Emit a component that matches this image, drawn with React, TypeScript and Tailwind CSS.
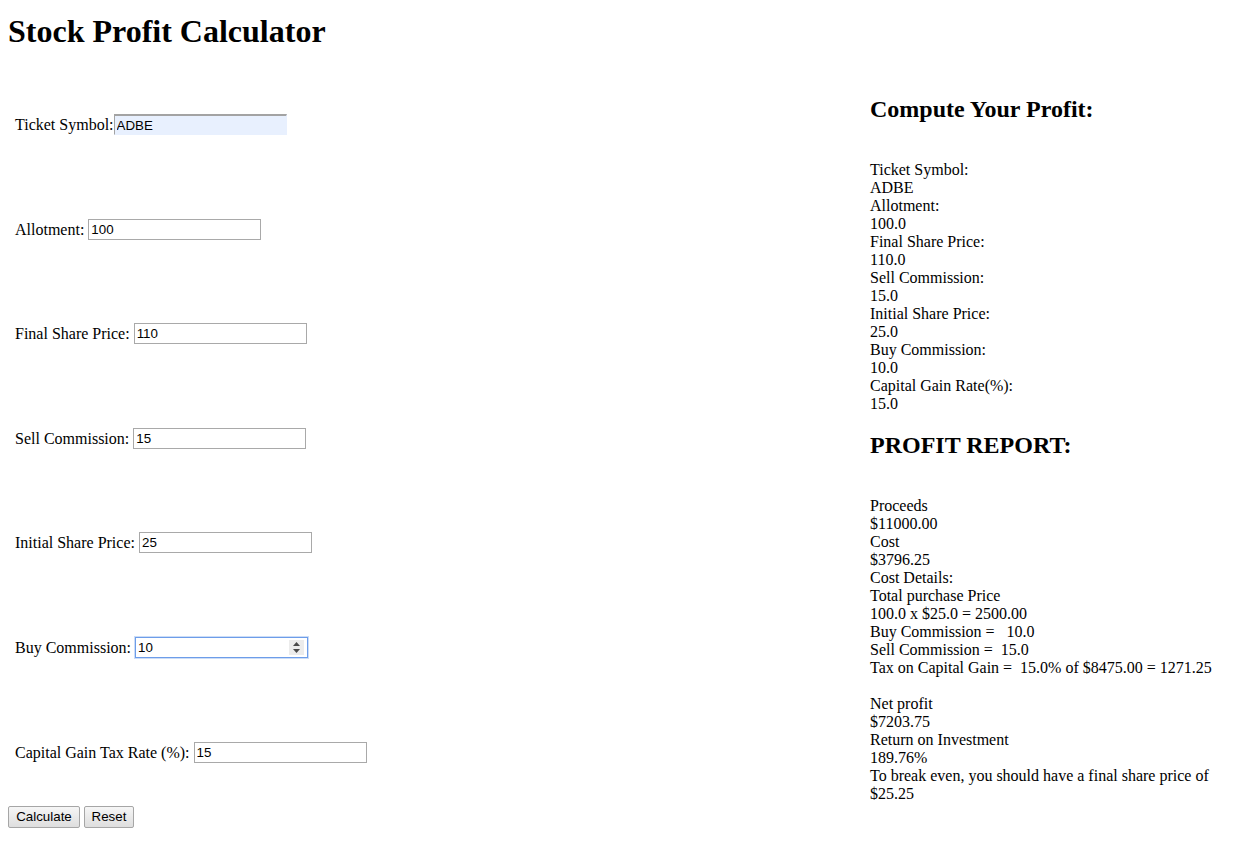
const fields = [
  { label: "Ticket Symbol:", value: "ADBE", mt: "mt-[64px]", kind: "auto" },
  { label: "Allotment: ", value: "100", mt: "mt-[84px]", kind: "plain" },
  { label: "Final Share Price: ", value: "110", mt: "mt-[83px]", kind: "plain" },
  { label: "Sell Commission: ", value: "15", mt: "mt-[84px]", kind: "plain" },
  { label: "Initial Share Price: ", value: "25", mt: "mt-[83px]", kind: "plain" },
  { label: "Buy Commission: ", value: "10", mt: "mt-[84px]", kind: "focus" },
  { label: "Capital Gain Tax Rate (%): ", value: "15", mt: "mt-[84px]", kind: "plain" },
];

const summary = [
  "Ticket Symbol:",
  "ADBE",
  "Allotment:",
  "100.0",
  "Final Share Price:",
  "110.0",
  "Sell Commission:",
  "15.0",
  "Initial Share Price:",
  "25.0",
  "Buy Commission:",
  "10.0",
  "Capital Gain Rate(%):",
  "15.0",
];

const report = [
  "Proceeds",
  "$11000.00",
  "Cost",
  "$3796.25",
  "Cost Details:",
  "Total purchase Price",
  "100.0 x $25.0 = 2500.00",
  "Buy Commission =\u00a0\u00a0 10.0",
  "Sell Commission =\u00a0 15.0",
  "Tax on Capital Gain =\u00a0 15.0% of $8475.00 = 1271.25",
  "\u00a0",
  "Net profit",
  "$7203.75",
  "Return on Investment",
  "189.76%",
  "To break even, you should have a final share price of",
  "$25.25",
];

function Field({ value, kind }: { value: string; kind: string }) {
  const base =
    "h-[21px] w-[173px] px-[2px] text-[13.33px] text-black outline-none";
  const font = { fontFamily: "'Liberation Sans', Arial, sans-serif" };
  if (kind === "auto") {
    return (
      <input
        readOnly
        value={value}
        className={`${base} bg-[#e8f0fe] border border-t-2 border-[#a3a3a3] border-r-[#e8f0fe] border-b-[#e8f0fe]`}
        style={font}
      />
    );
  }
  if (kind === "focus") {
    return (
      <span className="relative inline-flex">
        <input
          readOnly
          value={value}
          className={`${base} bg-white border border-[#6d9de9] shadow-[0_0_0_1px_rgba(109,157,233,0.35)]`}
          style={font}
        />
        <span className="absolute right-[4px] top-[3px] w-[15px] h-[15px] bg-[#ececec] flex items-center justify-center">
          <svg width="7" height="11" viewBox="0 0 7 11">
            <path d="M3.5 0 L7 4 L0 4 Z" fill="#4a4a4a" />
            <path d="M0 7 L7 7 L3.5 11 Z" fill="#4a4a4a" />
          </svg>
        </span>
      </span>
    );
  }
  return (
    <input
      readOnly
      value={value}
      className={`${base} bg-white border border-[#a9a9a9]`}
      style={font}
    />
  );
}

export default function App() {
  return (
    <div
      className="min-h-[852px] w-[1240px] bg-white text-black text-[16px] leading-[18px]"
      style={{ fontFamily: "'Liberation Serif', 'Times New Roman', serif" }}
    >
      <div className="flex">
        {/* form side */}
        <div className="w-[870px] shrink-0 pl-[8px]">
          <h1 className="mt-[13px] text-[32px] leading-[37px] font-bold">Stock Profit Calculator</h1>
          <div className="flex flex-col pl-[7px]">
            {fields.map((f) => (
              <div key={f.label} className={`${f.mt} flex items-center h-[21px]`}>
                <span className="whitespace-pre">{f.label}</span>
                <Field value={f.value} kind={f.kind} />
              </div>
            ))}
          </div>
          <div
            className="mt-[43px] flex gap-[4px] text-[13.33px]"
            style={{ fontFamily: "'Liberation Sans', Arial, sans-serif" }}
          >
            <button className="h-[22px] w-[72px] border border-[#a6a6a6] rounded-[2px] bg-gradient-to-b from-[#f6f6f6] to-[#dedede]">
              Calculate
            </button>
            <button className="h-[22px] w-[50px] border border-[#a6a6a6] rounded-[2px] bg-gradient-to-b from-[#f6f6f6] to-[#dedede]">
              Reset
            </button>
          </div>
        </div>

        {/* results side */}
        <div className="pt-[95px]">
          <h2 className="text-[24px] leading-[28px] font-bold">Compute Your Profit:</h2>
          <div className="mt-[38px] flex flex-col">
            {summary.map((s, i) => (
              <div key={i}>{s}</div>
            ))}
          </div>
          <h2 className="mt-[18px] text-[24px] leading-[28px] font-bold">PROFIT REPORT:</h2>
          <div className="mt-[38px] flex flex-col whitespace-pre">
            {report.map((s, i) => (
              <div key={i}>{s}</div>
            ))}
          </div>
        </div>
      </div>
    </div>
  );
}
